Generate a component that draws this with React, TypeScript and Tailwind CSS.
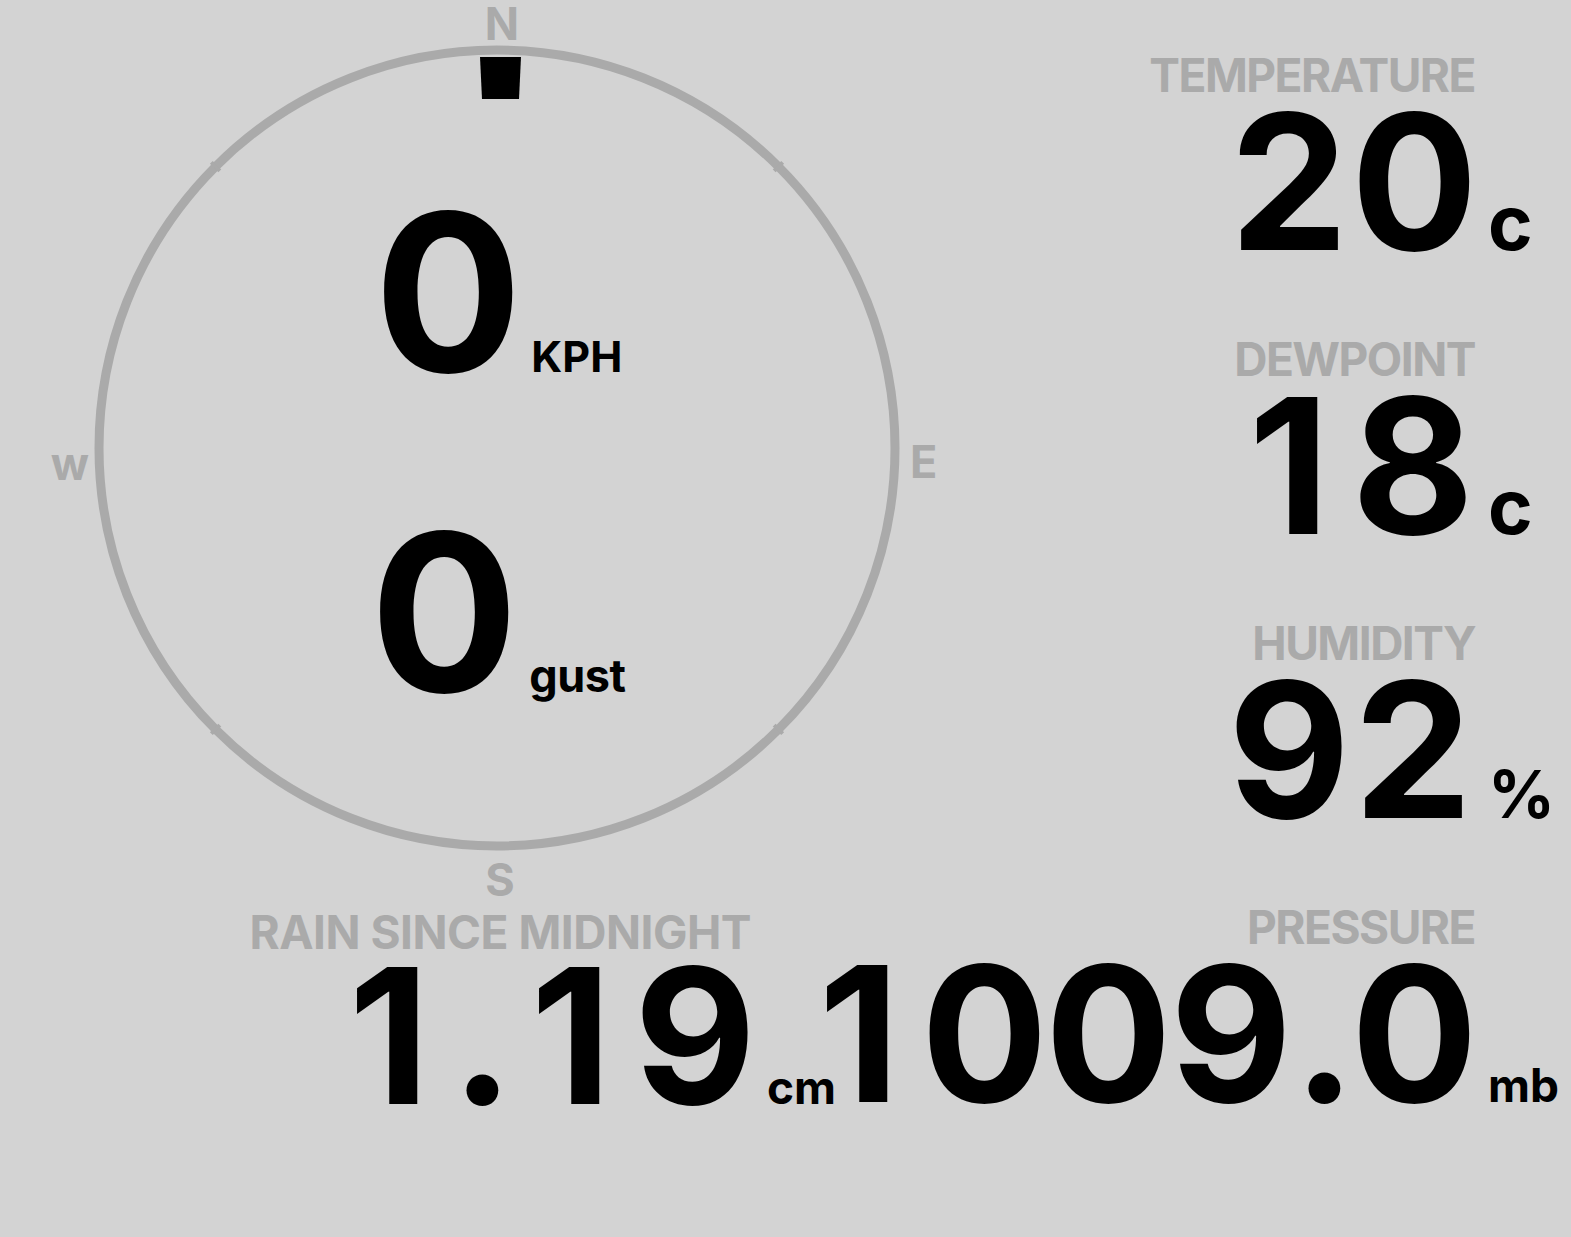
import React from "react";

const LABEL_R = "justify-self-end text-[46px] leading-none font-bold text-[#aaaaaa] tracking-[-1.5px] whitespace-nowrap";
const LABEL_L = "justify-self-end mr-[6px] text-[46px] leading-none font-bold text-[#aaaaaa] tracking-[-0.5px] whitespace-nowrap";

function Value({ text }: { text: string }) {
  return (
    <div className="justify-self-end text-[188px] leading-[150px] font-bold text-black whitespace-nowrap">
      {text.split("").map((ch, i) => (
        <span key={i} className={`inline-block text-center ${ch === "." ? "w-[58px]" : "w-[124px]"}`}>
          {ch}
        </span>
      ))}
    </div>
  );
}

function Reading({ label, value, unit, unitClass }: { label: string; value: string; unit: string; unitClass: string }) {
  return (
    <div className="grid grid-cols-[auto_96px] items-baseline gap-y-[9px]">
      <div className={LABEL_R}>{label}</div>
      <div />
      <Value text={value} />
      <div className={`pl-[13px] font-bold text-black ${unitClass}`}>{unit}</div>
    </div>
  );
}

function Compass() {
  const cx = 497;
  const cy = 448;
  const ticks = [45, 135, 225, 315].map((a) => {
    const r = (a * Math.PI) / 180;
    const s = Math.sin(r);
    const c = -Math.cos(r);
    return { x1: cx + s * 392, y1: cy + c * 392, x2: cx + s * 404, y2: cy + c * 404 };
  });
  return (
    <svg className="absolute inset-0" width="994" height="900" viewBox="0 0 994 900">
      <circle cx={cx} cy={cy} r={398} fill="none" stroke="#aaaaaa" strokeWidth={9} />
      {ticks.map((t, i) => (
        <line key={i} x1={t.x1} y1={t.y1} x2={t.x2} y2={t.y2} stroke="#aaaaaa" strokeWidth={4} />
      ))}
      <path d="M480 57 H521 L519 99 H482 Z" fill="#000" />
      <g fontFamily="Inter, sans-serif" fontWeight={700} fontSize={45} fill="#aaaaaa">
        <text x={502} y={40} textAnchor="middle">N</text>
        <text x={910} y={478}>E</text>
        <text x={500} y={896} textAnchor="middle">S</text>
        <text x={70} y={480} textAnchor="middle">w</text>
      </g>
    </svg>
  );
}

export default function App() {
  return (
    <div className="w-[1571px] h-[1237px] bg-[#d3d3d3] flex font-['Inter',sans-serif] overflow-hidden">
      <div className="w-[994px] flex flex-col shrink-0">
        <div className="relative h-[900px] w-[994px] flex flex-col items-start pt-[182px] gap-[100px]">
          <Compass />
          <div className="relative ml-[374px] flex items-baseline gap-[9px]">
            <span className="text-[220px] leading-none font-bold text-black">0</span>
            <span className="text-[43px] leading-none font-bold text-black">KPH</span>
          </div>
          <div className="relative ml-[370px] flex items-baseline gap-[11px]">
            <span className="text-[220px] leading-none font-bold text-black">0</span>
            <span className="text-[45px] leading-none font-bold text-black tracking-[-0.5px]">gust</span>
          </div>
        </div>
        <div className="self-end mr-[141px] mt-[9px]">
          <div className="grid grid-cols-[auto_96px] items-baseline gap-y-[6px]">
            <div className={LABEL_L}>RAIN SINCE MIDNIGHT</div>
            <div />
            <Value text="1.19" />
            <div className="pl-[10px] font-bold text-black text-[46px] leading-[40px]">cm</div>
          </div>
        </div>
      </div>
      <div className="flex-1 min-w-0 flex flex-col items-end pt-[52px] gap-[79px]">
        <Reading label="TEMPERATURE" value="20" unit="c" unitClass="text-[76px] leading-[60px]" />
        <Reading label="DEWPOINT" value="18" unit="c" unitClass="text-[76px] leading-[60px]" />
        <Reading label="HUMIDITY" value="92" unit="%" unitClass="text-[66px] leading-[54px]" />
        <Reading label="PRESSURE" value="1009.0" unit="mb" unitClass="text-[46px] leading-[40px]" />
      </div>
    </div>
  );
}
